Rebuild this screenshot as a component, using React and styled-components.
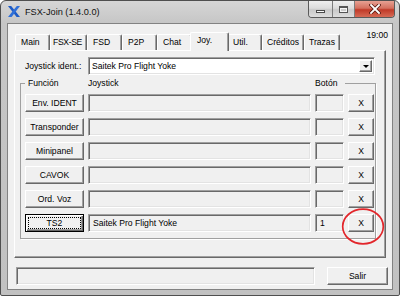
import React from "react";
import styled, { createGlobalStyle, css } from "styled-components";

const UI_FONT = `"Liberation Sans", Arial, sans-serif`;

const GlobalStyle = createGlobalStyle`
  html, body { margin: 0; padding: 0; background: #ffffff; }
  body { font-family: ${UI_FONT}; }
  * { box-sizing: border-box; }
`;

const raised = css`
  border: 1px solid;
  border-color: #ffffff #696969 #696969 #ffffff;
  box-shadow: inset -1px -1px 0 #a0a0a0;
  background: #f0f0f0;
`;

const sunken = css`
  border: 1px solid;
  border-color: #a0a0a0 #ffffff #ffffff #a0a0a0;
  box-shadow: inset 1px 1px 0 #696969, inset -1px -1px 0 #e3e3e3;
`;

const Window = styled.div`
  position: relative;
  width: 400px;
  height: 296px;
  border: 1px solid #4f4f4f;
  border-radius: 6px 6px 2px 2px;
  background: linear-gradient(#d6d6d6, #c6c6c6 22px, #c1c1c1);
  display: flex;
  flex-direction: column;
  overflow: hidden;
  font-family: ${UI_FONT};
  font-size: 8.6px;
  color: #000;
`;

const TitleBar = styled.div`
  height: 22px;
  flex: none;
  display: flex;
  align-items: flex-start;
  padding-left: 7px;
`;

const AppIcon = styled.svg`
  width: 12px;
  height: 11px;
  margin-top: 5px;
  flex: none;
`;

const Title = styled.span`
  margin-left: 5px;
  margin-top: 5px;
  font-size: 9.2px;
  line-height: 12px;
  color: #111;
`;

const CaptionGroup = styled.div`
  margin-left: auto;
  margin-right: 4px;
  display: flex;
  height: 17px;
  border: 1px solid #5a5a5a;
  border-top: none;
  border-radius: 0 0 4px 4px;
  overflow: hidden;
`;

const CaptionButton = styled.div`
  width: ${(p) => p.$w}px;
  height: 100%;
  display: flex;
  align-items: center;
  justify-content: center;
  border-left: 1px solid #7d7d7d;
  &:first-child { border-left: none; }
  background: ${(p) =>
    p.$close
      ? "linear-gradient(#e7a193, #d4705f 45%, #c03a28 55%, #d66a55)"
      : "linear-gradient(#efefef, #dcdcdc 45%, #c9c9c9 55%, #dddddd)"};
`;

const MinGlyph = styled.span`
  width: 9px;
  height: 3px;
  margin-top: 5px;
  background: #fafafa;
  border: 1px solid #4a4a4a;
`;

const MaxGlyph = styled.span`
  width: 9px;
  height: 7px;
  border: 1px solid #555;
  border-top-width: 2px;
  box-shadow: inset 0 0 0 1px #f4f4f4;
`;

const Client = styled.div`
  flex: 1;
  margin: 0 6px 5px;
  border: 1px solid #828282;
  background: #f0f0f0;
  display: flex;
  flex-direction: column;
  padding-top: 6px;
`;

const HeaderRow = styled.div`
  height: 20px;
  display: flex;
  align-items: flex-start;
  padding: 0 4px 0 7px;
`;

const TabStrip = styled.div`
  height: 20px;
  display: flex;
  align-items: flex-end;
`;

const Tab = styled.div`
  width: ${(p) => p.$w}px;
  height: 16px;
  padding-left: ${(p) => p.$pad}px;
  line-height: 15px;
  white-space: nowrap;
  letter-spacing: ${(p) => (p.$tight ? "-0.35px" : "0")};
  border-top: 1px solid #ffffff;
  border-left: 1px solid #ffffff;
  border-right: 1px solid #696969;
  box-shadow: inset -1px 0 0 #a0a0a0;
  border-radius: 2px 2px 0 0;
  background: #f0f0f0;
  ${(p) =>
    p.$active &&
    css`
      width: ${p.$w + 4}px;
      height: 19px;
      margin: 0 -2px -1px;
      padding-left: ${p.$pad + 2}px;
      line-height: 15px;
      position: relative;
      z-index: 1;
    `}
`;

const Clock = styled.span`
  margin-left: auto;
  line-height: 11px;
`;

const TabPanel = styled.div`
  margin-left: 6px;
  width: 372px;
  height: 208px;
  border: 1px solid;
  border-color: #ffffff #696969 #696969 #ffffff;
  box-shadow: inset -1px -1px 0 #a0a0a0;
  padding: 6px 0 0 5px;
  display: flex;
  flex-direction: column;
`;

const IdentRow = styled.div`
  display: flex;
  align-items: center;
  height: 18px;
  margin-left: 5px;
`;

const IdentLabel = styled.span`
  width: 63px;
  white-space: nowrap;
`;

const Combo = styled.div`
  ${sunken};
  width: 287px;
  height: 18px;
  background: #ffffff;
  display: flex;
  align-items: stretch;
  padding: 2px 2px 2px 3px;
`;

const ComboText = styled.span`
  flex: 1;
  display: flex;
  align-items: center;
`;

const ArrowButton = styled.span`
  ${raised};
  width: 13px;
  display: flex;
  align-items: center;
  justify-content: center;
`;

const Triangle = styled.span`
  width: 0;
  height: 0;
  border-top: 3px solid #000;
  border-left: 3px solid transparent;
  border-right: 3px solid transparent;
`;

const Group = styled.fieldset`
  margin: 2px 0 0 0;
  width: 356px;
  min-width: 0;
  padding: 5px 0 6px 4px;
  border: 1px solid #a0a0a0;
  box-shadow: 1px 1px 0 #ffffff;
`;

const Legend = styled.legend`
  padding: 0;
`;

const LegendRow = styled.span`
  display: inline-grid;
  grid-template-columns: 60px 227px auto;
  padding: 0 8px 0 3px;
  line-height: 12px;
  background: #f0f0f0;
`;

const Rows = styled.div`
  display: grid;
  row-gap: 6px;
`;

const Row = styled.div`
  display: grid;
  grid-template-columns: 59px 223px 29px 26px;
  column-gap: 4px;
  height: 18px;
`;

const Button = styled.div`
  ${raised};
  display: flex;
  align-items: center;
  justify-content: center;
  white-space: nowrap;
  ${(p) =>
    p.$focused &&
    css`
      border-color: #000;
      box-shadow: inset 1px 1px 0 #fff, inset -1px -1px 0 #696969, inset -2px -2px 0 #a0a0a0;
      align-items: stretch;
      justify-content: stretch;
    `}
`;

const FocusRect = styled.span`
  flex: 1;
  margin: 2px;
  border: 1px dotted #000;
  display: flex;
  align-items: center;
  justify-content: center;
`;

const Field = styled.div`
  ${sunken};
  background: #f0f0f0;
  display: flex;
  align-items: center;
  padding-left: 4px;
  white-space: nowrap;
  overflow: hidden;
`;

const BottomBar = styled.div`
  display: flex;
  gap: 12px;
  height: 18px;
  margin-top: 9px;
  padding-left: 8px;
`;

const StatusPanel = styled.div`
  ${sunken};
  width: 299px;
  background: #f0f0f0;
`;

const ExitButton = styled(Button)`
  width: 61px;
`;

const Highlight = styled.svg`
  position: absolute;
  left: 340px;
  top: 206px;
  width: 44px;
  height: 38px;
  pointer-events: none;
`;

const tabs = [
  { label: "Main", w: 35, pad: 5 },
  { label: "FSX-SE", w: 37, pad: 2, tight: true },
  { label: "FSD", w: 35, pad: 5 },
  { label: "P2P", w: 35, pad: 5 },
  { label: "Chat", w: 35, pad: 5 },
  { label: "Joy.", w: 35, pad: 4, active: true },
  { label: "Util.", w: 35, pad: 5 },
  { label: "Créditos", w: 42, pad: 4 },
  { label: "Trazas", w: 36, pad: 4 },
];

const rows = [
  { fn: "Env. IDENT", joy: "", btn: "" },
  { fn: "Transponder", joy: "", btn: "" },
  { fn: "Minipanel", joy: "", btn: "" },
  { fn: "CAVOK", joy: "", btn: "" },
  { fn: "Ord. Voz", joy: "", btn: "" },
  { fn: "TS2", joy: "Saitek Pro Flight Yoke", btn: "1", focused: true },
];

export default function App() {
  return (
    <>
      <GlobalStyle />
      <Window>
        <TitleBar>
          <AppIcon viewBox="0 0 12 11">
            <polygon points="0,0 3.2,0 12,11 8.6,11" fill="#1d5bc6" />
            <polygon points="8.8,0 12,0 3.6,11 0,11" fill="#2f6fd8" />
          </AppIcon>
          <Title>FSX-Join (1.4.0.0)</Title>
          <CaptionGroup>
            <CaptionButton $w={23}>
              <MinGlyph />
            </CaptionButton>
            <CaptionButton $w={22}>
              <MaxGlyph />
            </CaptionButton>
            <CaptionButton $w={40} $close>
              <svg width="12" height="10" viewBox="0 0 12 10">
                <path d="M2 1 L10 9 M10 1 L2 9" stroke="#5b1b12" strokeWidth="3.4" strokeLinecap="square" />
                <path d="M2 1 L10 9 M10 1 L2 9" stroke="#ffffff" strokeWidth="1.8" strokeLinecap="square" />
              </svg>
            </CaptionButton>
          </CaptionGroup>
        </TitleBar>
        <Client>
          <HeaderRow>
            <TabStrip>
              {tabs.map((t) => (
                <Tab key={t.label} $w={t.w} $pad={t.pad} $tight={t.tight} $active={t.active}>
                  {t.label}
                </Tab>
              ))}
            </TabStrip>
            <Clock>19:00</Clock>
          </HeaderRow>
          <TabPanel>
            <IdentRow>
              <IdentLabel>Joystick ident.:</IdentLabel>
              <Combo>
                <ComboText>Saitek Pro Flight Yoke</ComboText>
                <ArrowButton>
                  <Triangle />
                </ArrowButton>
              </Combo>
            </IdentRow>
            <Group>
              <Legend>
                <LegendRow>
                  <span>Función</span>
                  <span>Joystick</span>
                  <span>Botón</span>
                </LegendRow>
              </Legend>
              <Rows>
                {rows.map((r) => (
                  <Row key={r.fn}>
                    <Button $focused={r.focused}>
                      {r.focused ? <FocusRect>{r.fn}</FocusRect> : r.fn}
                    </Button>
                    <Field>{r.joy}</Field>
                    <Field>{r.btn}</Field>
                    <Button>X</Button>
                  </Row>
                ))}
              </Rows>
            </Group>
          </TabPanel>
          <BottomBar>
            <StatusPanel />
            <ExitButton>Salir</ExitButton>
          </BottomBar>
        </Client>
        <Highlight viewBox="0 0 44 38">
          <ellipse cx="22" cy="19.5" rx="20.3" ry="17.3" fill="none" stroke="#e2262b" strokeWidth="1.7" />
        </Highlight>
      </Window>
    </>
  );
}
